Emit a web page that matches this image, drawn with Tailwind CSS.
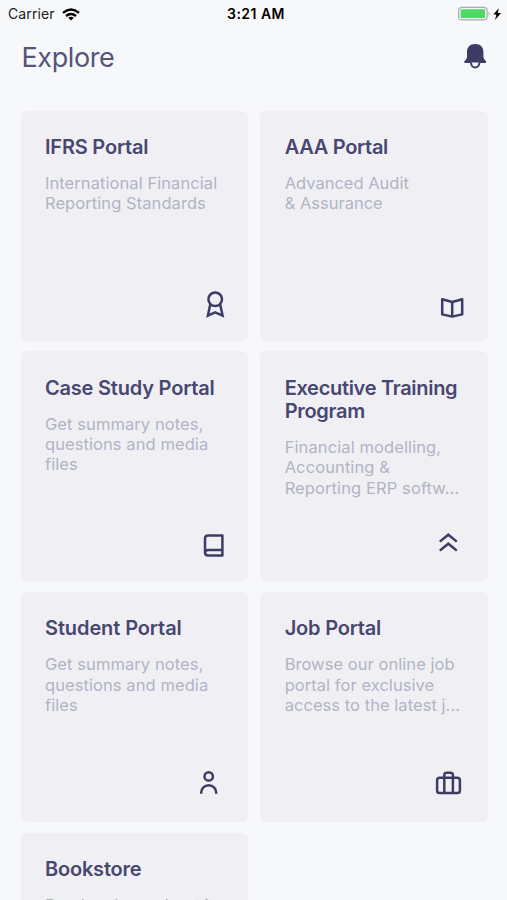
<!DOCTYPE html>
<html lang="en">
<head>
<meta charset="utf-8">
<title>Explore</title>
<script src="https://cdn.jsdelivr.net/npm/@tailwindcss/browser@4"></script>
</head>
<body class="h-[900px] overflow-hidden bg-[#f7f8fa] font-['Inter','Liberation_Sans',sans-serif]">
<header class="grid h-[28px] grid-cols-3 items-center text-black">
  <div class="flex items-center gap-[7px] pl-[8px] text-[14px] leading-[28px] tracking-[0.1px] text-[#202022]"><span>Carrier</span>
    <svg class="h-[13px] w-[18px]" viewBox="0 0 18 13" fill="none" stroke="#000" stroke-width="2.3"><path d="M1 4.8Q9-1.8 17 4.8M4 8Q9 4 14 8"/><path d="M9 12.5 6.2 9.7Q9 7.6 11.8 9.7Z" fill="#000" stroke="none"/></svg>
  </div>
  <div class="pl-[5px] text-center text-[14px] font-semibold leading-[28px] tracking-[0.45px]">3:21 AM</div>
  <div class="flex items-center justify-end pr-[5px]">
    <svg class="h-[16px] w-[45px]" viewBox="457 5.5 45 16"><rect x="458.6" y="6.8" width="28.5" height="12.6" rx="3.5" fill="#f4f5f6" stroke="#aaabad" stroke-width="1.2"/><rect x="460.6" y="8.8" width="24.4" height="8.6" rx="1" fill="#4cd964"/><path d="M488.5 11.2q2.3 2 0 4Z" fill="#aaabad"/><path d="M498.7 7.8 493.4 14h3l-1.4 5.5 6-7h-3.2Z" fill="#000"/></svg>
  </div>
</header>
<div class="flex h-[82.6px] items-start justify-between pl-[21.5px] pr-[19px]">
  <h1 class="pt-[13px] text-[27px] leading-[34px] tracking-[-0.4px] text-[#56547c]">Explore</h1>
  <svg class="mt-[14px] h-[28px] w-[26px]" viewBox="462 42 26 28"><path d="M475.2 44C469.8 44 467 47.4 467 52v5q0 1.7-1.5 3-1.8 1.5-1.2 2.4.4.7 1.5.7h18.8q1.1 0 1.5-.7.5-.9-1.2-2.4-1.5-1.3-1.5-3v-5C483.4 47.4 480.6 44 475.2 44Z" fill="#3d3c67"/><path d="M471 62.6a4.2 5 0 0 0 8.4 0" fill="#f7f8fa" stroke="#3d3c67" stroke-width="2"/></svg>
</div>
<main class="grid grid-cols-2 gap-x-[12.5px] gap-y-[10.7px] pl-[20.8px] pr-[19.4px] text-[#484770]">
  <section class="flex h-[230px] flex-col rounded-[6px] bg-[#f0f0f4] pl-[24.2px] pt-[25.4px]">
    <h2 class="text-[20px] font-semibold leading-[23.5px] tracking-[-0.2px]">IFRS Portal</h2>
    <p class="mt-[13.4px] text-[16.5px] leading-[20.3px] tracking-[0.07px] text-[#b0b4c5]">International Financial<br>Reporting Standards</p>
    <svg class="mt-auto h-[60px] w-[60px] self-end" viewBox="188 280 60 60" fill="none" stroke="#3d3c66" stroke-width="2.5"><circle cx="215.2" cy="298.3" r="6.8"/><path d="M210.3 303 207.9 314.7 215.2 311.4 222.6 314.7 220.1 303"/></svg>
  </section>
  <section class="flex h-[230px] flex-col rounded-[6px] bg-[#f0f0f4] pl-[24.2px] pt-[25.4px]">
    <h2 class="text-[20px] font-semibold leading-[23.5px] tracking-[-0.3px]">AAA Portal</h2>
    <p class="mt-[13.4px] text-[16.5px] leading-[20.3px] text-[#b0b4c5]">Advanced Audit<br>&amp; Assurance</p>
    <svg class="mt-auto h-[60px] w-[60px] self-end" viewBox="428 280 60 60" fill="none" stroke="#3d3c66" stroke-width="2.5" stroke-linejoin="round"><path d="M442.2 298.3 452.2 301 462.2 298.3V313.4L452.2 315.6 442.2 313.4ZM452.2 301v14.6"/></svg>
  </section>
  <section class="flex h-[230px] flex-col rounded-[6px] bg-[#f0f0f4] pl-[24.2px] pt-[25.4px]">
    <h2 class="text-[20px] font-semibold leading-[23.5px] tracking-[-0.2px]">Case Study Portal</h2>
    <p class="mt-[13.4px] text-[16.5px] leading-[20.3px] tracking-[0.08px] text-[#b0b4c5]">Get summary notes,<br>questions and media<br>files</p>
    <svg class="mt-auto h-[60px] w-[60px] self-end" viewBox="188 521 60 60" fill="none" stroke="#3d3c66" stroke-width="2.5"><path d="M222.4 555.6H208q-3 0-3-3V538.6q0-3 3-3h14.4ZM205 552.7q0-2.8 3-2.8h14.4" stroke-linejoin="round"/></svg>
  </section>
  <section class="flex h-[230px] flex-col rounded-[6px] bg-[#f0f0f4] pl-[24.2px] pt-[25.4px]">
    <h2 class="text-[20px] font-semibold leading-[23.5px] tracking-[-0.3px]">Executive Training<br>Program</h2>
    <p class="mt-[13.4px] text-[16.5px] leading-[20.3px] tracking-[0.1px] text-[#b0b4c5]">Financial modelling,<br>Accounting &amp;<br>Reporting ERP softw...</p>
    <svg class="mt-auto h-[60px] w-[60px] self-end" viewBox="428 521 60 60" fill="none" stroke="#3d3c66" stroke-width="2.5"><path d="M439.8 541.6 448.3 534.7 456.8 541.6M439.8 550.6 448.3 543.7 456.8 550.6"/></svg>
  </section>
  <section class="flex h-[230px] flex-col rounded-[6px] bg-[#f0f0f4] pl-[24.2px] pt-[25.4px]">
    <h2 class="text-[20px] font-semibold leading-[23.5px] tracking-[-0.1px]">Student Portal</h2>
    <p class="mt-[13.4px] text-[16.5px] leading-[20.3px] tracking-[0.08px] text-[#b0b4c5]">Get summary notes,<br>questions and media<br>files</p>
    <svg class="mt-auto h-[60px] w-[60px] self-end" viewBox="188 762 60 60" fill="none" stroke="#3d3c66" stroke-width="2.5"><circle cx="208.7" cy="776.4" r="4.2"/><path d="M201.2 793.8v-1.2a7.5 7.4 0 0 1 15 0v1.2"/></svg>
  </section>
  <section class="flex h-[230px] flex-col rounded-[6px] bg-[#f0f0f4] pl-[24.2px] pt-[25.4px]">
    <h2 class="text-[20px] font-semibold leading-[23.5px] tracking-[-0.2px]">Job Portal</h2>
    <p class="mt-[13.4px] text-[16.5px] leading-[20.3px] tracking-[0.05px] text-[#b0b4c5]">Browse our online job<br>portal for exclusive<br>access to the latest j...</p>
    <svg class="mt-auto h-[60px] w-[60px] self-end" viewBox="428 762 60 60" fill="none" stroke="#3d3c66" stroke-width="2.5"><rect x="437.1" y="777.8" width="22.8" height="15.2" rx="2.6"/><path d="M444.3 793V775q0-2.3 2.3-2.3h4q2.3 0 2.3 2.3v18"/></svg>
  </section>
  <section class="flex h-[67px] flex-col overflow-hidden rounded-t-[6px] bg-[#f0f0f4] pl-[24.2px] pt-[25.4px]">
    <h2 class="shrink-0 text-[20px] font-semibold leading-[23.5px] tracking-[-0.2px]">Bookstore</h2>
    <p class="mt-[13.4px] shrink-0 text-[16.5px] leading-[20.3px] text-[#b0b4c5]">Read and see about it</p>
  </section>
</main>
</body>
</html>
